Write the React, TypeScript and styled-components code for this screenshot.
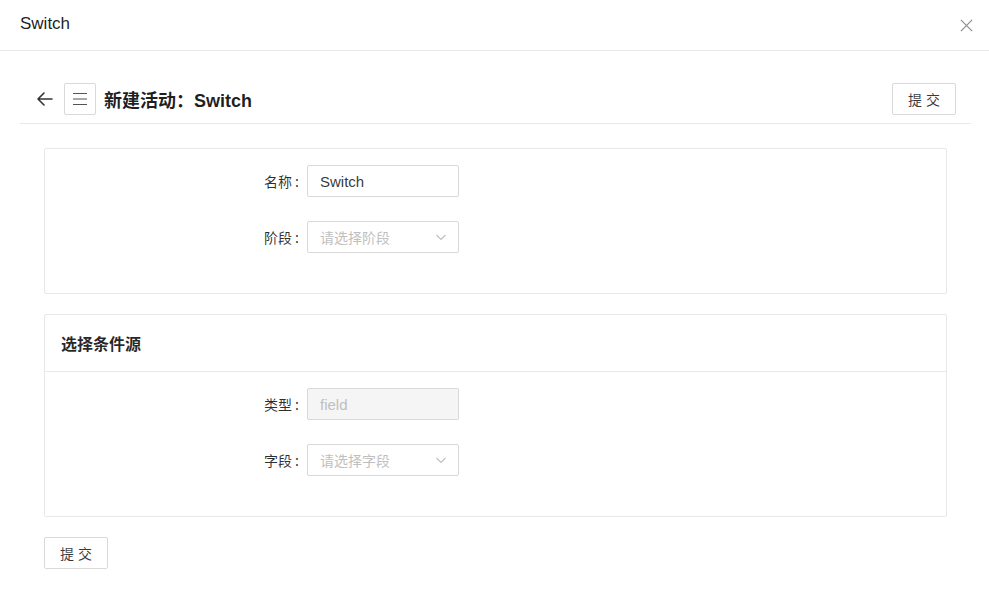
import React from "react";
import styled, { createGlobalStyle } from "styled-components";

const Global = createGlobalStyle`
  html, body { margin: 0; padding: 0; background: #fff; }
  body {
    font-family: "Liberation Sans", "Noto Sans CJK SC", sans-serif;
    color: rgba(0,0,0,0.85);
    font-size: 14px;
  }
  * { box-sizing: border-box; }
`;

const Page = styled.div`
  width: 989px;
  height: 615px;
  display: flex;
  flex-direction: column;
`;

const TopBar = styled.div`
  height: 51px;
  border-bottom: 1px solid #e8e8e8;
  display: flex;
  align-items: center;
  justify-content: space-between;
  padding: 0 15px 0 20px;
`;

const TopTitle = styled.div`
  font-size: 17px;
  color: rgba(0,0,0,0.9);
  margin-top: -3px;
`;

const IconBtn = styled.button`
  border: none;
  background: none;
  padding: 0;
  display: flex;
  align-items: center;
  justify-content: center;
  cursor: pointer;
  color: #888;
`;

const Body = styled.div`
  padding: 32px 18px 0 20px;
  display: flex;
  flex-direction: column;
`;

const PageHeader = styled.div`
  padding: 0 15px 8px 16px;
  border-bottom: 1px solid #e8e8e8;
  display: flex;
  align-items: center;
`;

const BackBtn = styled(IconBtn)`
  color: #333;
  width: 18px;
  margin-right: 10px;
`;

const MenuBtn = styled.button`
  width: 32px;
  height: 32px;
  border: 1px solid #d9d9d9;
  border-radius: 2px;
  background: #fff;
  display: flex;
  align-items: center;
  justify-content: center;
  padding: 0;
  margin-right: 8px;
  color: #555;
`;

const HeadTitle = styled.h1`
  margin: 0;
  font-size: 18px;
  font-weight: 600;
  color: rgba(0,0,0,0.88);
  flex: 1;
  font-family: "Liberation Sans", "Noto Sans CJK SC", sans-serif;
`;

const Button = styled.button<{ $w?: number }>`
  height: 32px;
  width: ${(p) => p.$w ?? 64}px;
  border: 1px solid #d9d9d9;
  border-radius: 2px;
  background: #fff;
  font-family: "Noto Sans CJK SC", sans-serif;
  font-size: 14px;
  color: rgba(0,0,0,0.78);
  letter-spacing: 4px;
  padding: 0 0 0 4px;
  cursor: pointer;
`;

const Content = styled.div`
  padding: 24px 24px 0 24px;
  display: flex;
  flex-direction: column;
  gap: 20px;
`;

const Card = styled.section`
  border: 1px solid #e8e8e8;
  border-radius: 2px;
  background: #fff;
`;

const CardHead = styled.div`
  height: 57px;
  border-bottom: 1px solid #e8e8e8;
  display: flex;
  align-items: center;
  padding: 0 16px;
  font-size: 16px;
  font-weight: 600;
  color: rgba(0,0,0,0.85);
  font-family: "Noto Sans CJK SC", sans-serif;
`;

const CardBody = styled.div`
  padding: 16px 0 16px;
  display: flex;
  flex-direction: column;
  gap: 24px;
`;

const Row = styled.div`
  display: grid;
  grid-template-columns: 262px 152px;
  align-items: center;
  &:last-child { margin-bottom: 24px; }
`;

const Label = styled.label`
  text-align: right;
  font-family: "Noto Sans CJK SC", sans-serif;
  font-size: 14px;
  color: rgba(0,0,0,0.82);
  &::after {
    content: ":";
    margin: 0 8px 0 3px;
  }
`;

const Input = styled.div<{ $disabled?: boolean; $placeholder?: boolean }>`
  height: 32px;
  border: 1px solid #d9d9d9;
  border-radius: 2px;
  background: ${(p) => (p.$disabled ? "#f5f5f5" : "#fff")};
  color: ${(p) => (p.$disabled || p.$placeholder ? "#bfbfbf" : "rgba(0,0,0,0.8)")};
  display: flex;
  align-items: center;
  justify-content: space-between;
  padding: 0 11px 0 12px;
  font-size: ${(p) => (p.$placeholder ? 14 : 15)}px;
  font-family: "Liberation Sans", "Noto Sans CJK SC", sans-serif;
`;

const Footer = styled.div`
  display: flex;
`;

const Chevron = () => (
  <svg width="12" height="12" viewBox="0 0 12 12" fill="none" stroke="#bfbfbf" strokeWidth="1.1">
    <path d="M1.5 4l4.5 4.5L10.5 4" />
  </svg>
);

export default function App() {
  return (
    <Page>
      <Global />
      <TopBar>
        <TopTitle>Switch</TopTitle>
        <IconBtn aria-label="close">
          <svg width="15" height="15" viewBox="0 0 16 16" fill="none" stroke="#8c8c8c" strokeWidth="1.3">
            <path d="M2 2l12 12M14 2L2 14" />
          </svg>
        </IconBtn>
      </TopBar>
      <Body>
        <PageHeader>
          <BackBtn aria-label="back">
            <svg width="18" height="18" viewBox="0 0 18 18" fill="none" stroke="#333" strokeWidth="1.6" strokeLinecap="round" strokeLinejoin="round">
              <path d="M16 9H2M8 3L2 9l6 6" />
            </svg>
          </BackBtn>
          <MenuBtn aria-label="menu">
            <svg width="16" height="14" viewBox="0 0 16 14" fill="none" stroke="#555" strokeWidth="1.2">
              <path d="M1 1.5h14M1 7h14M1 12.5h14" />
            </svg>
          </MenuBtn>
          <HeadTitle>新建活动：Switch</HeadTitle>
          <Button>提交</Button>
        </PageHeader>
        <Content>
          <Card>
            <CardBody>
              <Row>
                <Label>名称</Label>
                <Input>Switch</Input>
              </Row>
              <Row>
                <Label>阶段</Label>
                <Input $placeholder>
                  <span>请选择阶段</span>
                  <Chevron />
                </Input>
              </Row>
            </CardBody>
          </Card>
          <Card>
            <CardHead>选择条件源</CardHead>
            <CardBody>
              <Row>
                <Label>类型</Label>
                <Input $disabled>field</Input>
              </Row>
              <Row>
                <Label>字段</Label>
                <Input $placeholder>
                  <span>请选择字段</span>
                  <Chevron />
                </Input>
              </Row>
            </CardBody>
          </Card>
          <Footer>
            <Button>提交</Button>
          </Footer>
        </Content>
      </Body>
    </Page>
  );
}
